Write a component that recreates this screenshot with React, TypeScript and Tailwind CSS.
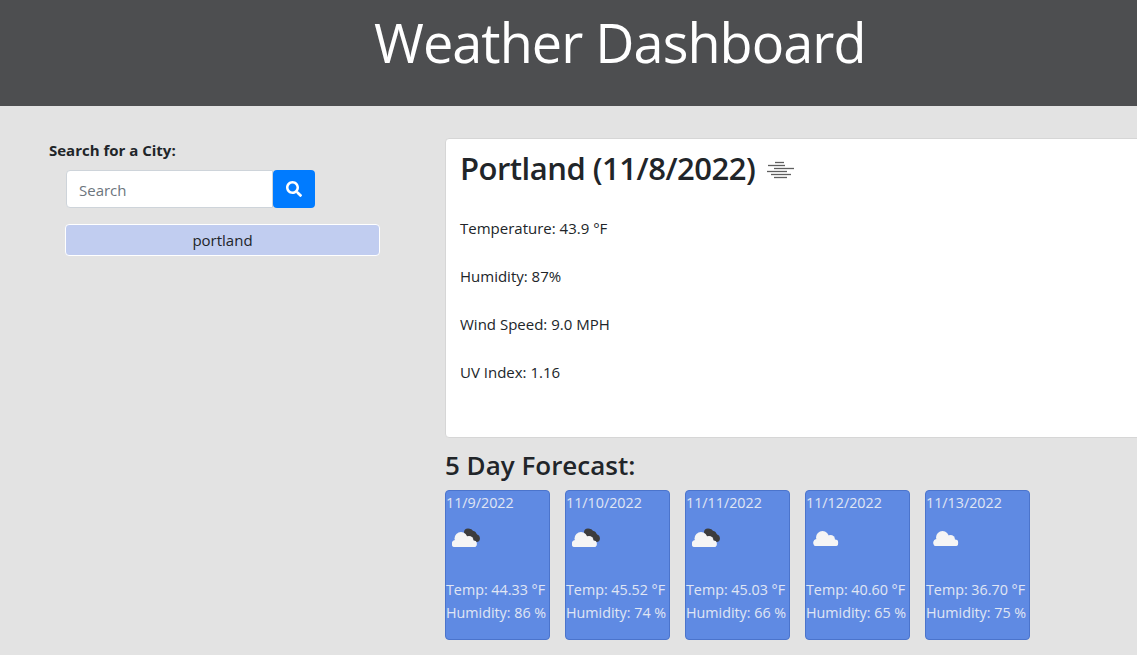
import { FaSearch } from "react-icons/fa";

const forecast = [
  { date: "11/9/2022", temp: "44.33", humidity: "86", dark: true },
  { date: "11/10/2022", temp: "45.52", humidity: "74", dark: true },
  { date: "11/11/2022", temp: "45.03", humidity: "66", dark: true },
  { date: "11/12/2022", temp: "40.60", humidity: "65", dark: false },
  { date: "11/13/2022", temp: "36.70", humidity: "75", dark: false },
];

function CloudIcon({ dark }: { dark: boolean }) {
  return (
    <svg width="50" height="50" viewBox="0 0 50 50" className="block">
      {dark && (
        <g fill="#3d3d3d">
          <circle cx="22" cy="18.5" r="4" />
          <circle cx="26.5" cy="21" r="4" />
          <circle cx="30.5" cy="24.5" r="3.4" />
          <path d="M20 18l5-3 8 7-3 5-8-2z" />
        </g>
      )}
      <g fill="#f5f5f5" transform={dark ? "translate(0 0)" : "translate(1.5 -1)"}>
        <circle cx="15" cy="24.5" r="6.5" />
        <circle cx="23" cy="26.5" r="4.5" />
        <circle cx="9.5" cy="29.5" r="3.5" />
        <circle cx="27.5" cy="29.8" r="3.2" />
        <rect x="6" y="27" width="24.5" height="6" rx="2.5" />
      </g>
    </svg>
  );
}

function MistIcon() {
  return (
    <svg width="28" height="20" viewBox="0 0 28 20" className="block">
      <g stroke="#5f5f5f" strokeWidth="1.3">
        <path d="M8 2.5h9" />
        <path d="M1 5.5h17" />
        <path d="M7 8.5h20" />
        <path d="M0 11.5h20" />
        <path d="M4 14.5h20" />
        <path d="M7 17.5h13" />
      </g>
    </svg>
  );
}

export default function App() {
  return (
    <div className="h-[655px] overflow-hidden bg-[#e3e3e3] text-[#212529] font-['Open_Sans',sans-serif]">
      <header className="h-[106px] bg-[#4d4e50] pl-[374px] pt-[6px]">
        <h1 className="text-[54px] leading-[72px] font-normal text-white tracking-[-0.95px] whitespace-nowrap">
          Weather Dashboard
        </h1>
      </header>

      <div className="flex">
        <aside className="w-[445px] shrink-0 pt-[32px]">
          <p className="ml-[49px] text-[15px] leading-6 font-bold">Search for a City:</p>
          <div className="ml-[66px] mt-2 flex">
            <input
              placeholder="Search"
              className="h-[38px] w-[207px] rounded-l border border-[#ced4da] bg-white px-3 pt-0.5 text-[15px] placeholder:text-[#6c757d]"
            />
            <button className="flex h-[38px] w-[42px] items-center justify-center rounded bg-[#007bff]">
              <FaSearch size={16} color="#fff" />
            </button>
          </div>
          <button className="ml-[65px] mt-4 h-8 w-[315px] rounded border border-white bg-[#c1cdf0] text-[15px]">
            portland
          </button>
        </aside>

        <main className="w-[720px] shrink-0 pt-8">
          <section className="h-[300px] rounded border border-[#d6d6d6] bg-white px-[14px] pt-[5px]">
            <div className="flex items-center">
              <h2 className="text-[31px] leading-[48px] font-semibold tracking-[-0.5px] whitespace-nowrap">
                Portland (11/8/2022)
              </h2>
              <span className="ml-[12px] mt-1">
                <MistIcon />
              </span>
            </div>
            <div className="mt-[24px] space-y-6 text-[15px] leading-6">
              <p>Temperature: 43.9 °F</p>
              <p>Humidity: 87%</p>
              <p>Wind Speed: 9.0 MPH</p>
              <p>UV Index: 1.16</p>
            </div>
          </section>

          <h3 className="mt-[10px] text-[26px] leading-[34px] font-semibold whitespace-nowrap">5 Day Forecast:</h3>

          <div className="mt-[8px] flex gap-[15px]">
            {forecast.map((day) => (
              <div
                key={day.date}
                className="h-[150px] w-[105px] rounded border border-[#4b74cc] bg-[#5f8ae3] text-[14.3px] leading-[23px] text-[#e0e6f4] whitespace-nowrap"
              >
                <p>{day.date}</p>
                <CloudIcon dark={day.dark} />
                <p className="mt-[14px]">Temp: {day.temp} °F</p>
                <p>Humidity: {day.humidity} %</p>
              </div>
            ))}
          </div>
        </main>
      </div>
    </div>
  );
}
